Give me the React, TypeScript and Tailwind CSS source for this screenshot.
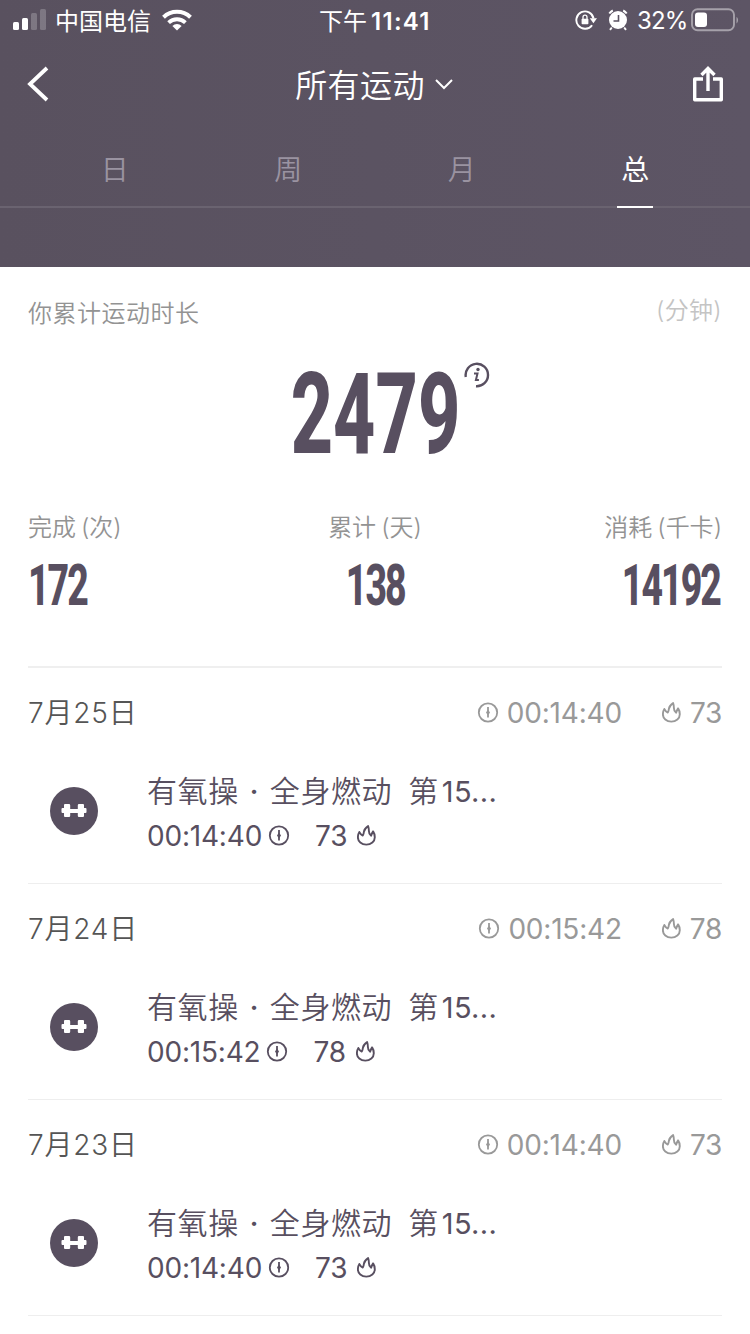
import type { ReactNode } from 'react';

interface Workout {
  date: string;
  duration: string;
  calories: number;
}

const workouts: Workout[] = [
  { date: '7月25日', duration: '00:14:40', calories: 73 },
  { date: '7月24日', duration: '00:15:42', calories: 78 },
  { date: '7月23日', duration: '00:14:40', calories: 73 },
];

const tabs = ['日', '周', '月', '总'];

function ClockIcon() {
  return (
    <svg width="22" height="22" viewBox="0 0 22 22" fill="none" stroke="currentColor" className="shrink-0">
      <circle cx="11" cy="10.5" r="9.2" strokeWidth="1.8" />
      <path d="M11 5v10.5" strokeWidth="1.8" />
      <path d="M11 7.5l2 3-2 3-2-3z" fill="currentColor" stroke="none" />
    </svg>
  );
}

function FlameIcon() {
  return (
    <svg width="20" height="22" viewBox="0 0 20 22" fill="none" stroke="currentColor" strokeWidth="1.9" strokeLinejoin="round" className="shrink-0">
      <path d="M2.4 7C1.400 8.600.9 10.400.9 12.200c0 4.300 3.600 7.400 8.400 7.400s8.500-3.100 8.500-7.400c0-2.200-.5-4.100-1.700-5.800-.6.900-1.400 2.300-2 4.300-1.500-1-2.200-2.600-2.200-4.700 0-1.700-.2-3.300-.8-4.900-2.400 1.600-3.900 3.500-4.200 5.700-.2 1.500-.4 2.700-1.100 3.800C4.300 9.800 3.100 8.700 2.400 7z" />
    </svg>
  );
}

function StatusBar() {
  return (
    <div className="flex h-10 items-center pl-[13px] pr-[11px]">
      <svg width="34" height="22" viewBox="0 0 34 22" fill="#fff">
        <rect x="0" y="13" width="6" height="8" rx="1.5" />
        <rect x="9" y="9" width="6" height="12" rx="1.5" />
        <rect x="18" y="4" width="6" height="17" rx="1.5" opacity=".22" />
        <rect x="27" y="0" width="6" height="21" rx="1.5" opacity=".22" />
      </svg>
      <span className="ml-[8px] w-[98px] pt-[3px] text-[24px] leading-10">中国电信</span>
      <svg width="30" height="22" viewBox="0 0 30 22" fill="none" stroke="#fff" strokeWidth="4" className="ml-[9px]">
        <path d="M1.5 8.2a19.500 19.500 0 0 1 27 0" />
        <path d="M6.6 13.7a12 12 0 0 1 16.800 0" strokeWidth="3.8" />
        <path d="M15 21.500l-4.600-4.600a6.600 6.600 0 0 1 9.200 0z" fill="#fff" stroke="none" />
      </svg>
      <div className="ml-[127px] flex w-[114px] items-center gap-[4px] pt-[3px] whitespace-nowrap">
        <span className="text-[24px] leading-10">下午</span>
        <span className="text-[24px] font-semibold tracking-[1.3px]">11:41</span>
      </div>
      <svg width="22" height="22" viewBox="0 0 22 22" fill="none" stroke="#fff" strokeWidth="1.9" className="ml-[142px]">
        <path d="M17.1 16.200a8.700 8.700 0 1 1 1.500-6.700" />
        <path d="M14.800 9.300h7.200l-3.600 5z" fill="#fff" stroke="none" />
        <rect x="6.6" y="9.8" width="6.8" height="5.4" rx="0.8" fill="#fff" stroke="none" />
        <path d="M8 10V8.200a2 2 0 0 1 4 0V10" strokeWidth="1.3" />
      </svg>
      <svg width="20" height="22" viewBox="0 0 20 22" fill="none" stroke="#fff" className="ml-[11px]">
        <circle cx="10" cy="11" r="9" fill="#fff" stroke="none" />
        <path d="M1.300 4.500a9 9 0 0 1 3.500-3M18.700 4.500a9 9 0 0 0-3.500-3M3.800 18.500L2 20.800M16.200 18.500l1.800 2.300" strokeWidth="2" />
        <path d="M10.500 6v6H5.500" stroke="#5a5261" strokeWidth="1.6" />
      </svg>
      <span className="ml-[9px] w-[50px] pt-[2px] text-[24px] leading-10 tracking-[-0.8px]">32%</span>
      <svg width="48" height="24" viewBox="0 0 48 24" fill="none" className="ml-[4px] shrink-0">
        <rect x="1" y="1.2" width="42" height="21" rx="5.5" stroke="#fff" strokeOpacity=".45" strokeWidth="1.9" />
        <rect x="4" y="4.5" width="12" height="14.5" rx="3" fill="#fff" />
        <path d="M45.500 9c2 1 2 5 0 6.500z" fill="#fff" opacity=".45" />
      </svg>
    </div>
  );
}

function Header() {
  return (
    <header className="h-[267px] bg-gradient-to-r from-[#59515f] to-[#5d5565] text-white">
      <StatusBar />
      <div className="flex h-[88px] items-center justify-between pl-[27px] pr-[26px]">
        <svg width="32" height="36" viewBox="0 0 32 36" fill="none" stroke="#fff" strokeWidth="3.8">
          <path d="M20 2L3 18l17 16" />
        </svg>
        <div className="mr-[3px] flex items-center">
          <span className="pt-[3px] text-[32px] leading-[48px] font-[350] tracking-[0.4px]">所有运动</span>
          <svg width="18" height="12" viewBox="0 0 18 12" fill="none" stroke="#fff" strokeWidth="2" className="ml-[10px]">
            <path d="M1 2l8 8 8-8" />
          </svg>
        </div>
        <svg width="32" height="36" viewBox="0 0 32 36" fill="none" stroke="#fff" strokeWidth="3.4">
          <path d="M11 13H2.700v20.700h26.600V13H21" strokeLinejoin="round" />
          <path d="M16 25V3M9.500 9L16 2.500 22.500 9" />
        </svg>
      </div>
      <nav className="flex h-20 justify-center border-b-2 border-[#6a6370] px-[28px]">
        {tabs.map((tab) => (
          <div key={tab} className="flex w-[173.5px] shrink-0 justify-center">
            <div
              className={
                tab === '总'
                  ? 'h-20 w-[36px] border-b-2 border-white text-center text-[28px] leading-[84px]'
                  : 'h-20 w-[36px] text-center text-[28px] leading-[84px] font-[350] text-[#9a93a1]'
              }
            >
              {tab}
            </div>
          </div>
        ))}
      </nav>
    </header>
  );
}

function Stat({ label, unit, children, className, origin }: { label: string; unit: string; children: ReactNode; className: string; origin: string }) {
  return (
    <div className={`flex flex-1 flex-col ${className}`}>
      <div className="flex h-9 items-center gap-[5px] pt-[3px] text-[24px] font-[350] text-[#939393]">
        <span>{label}</span>
        <span>({unit})</span>
      </div>
      <div className={`mt-[10px] scale-x-[0.65] font-['Roboto'] text-[57.5px] leading-[64px] font-extrabold tracking-[-3px] ${origin}`}>{children}</div>
    </div>
  );
}

function Summary() {
  return (
    <section className="mx-[28px] h-[401px] border-b-2 border-[#efefef]">
      <div className="flex h-[90px] justify-between">
        <span className="text-[24px] leading-[93px] font-[350] tracking-[0.5px] text-[#939393]">你累计运动时长</span>
        <span className="text-[24px] leading-[88px] font-[350] tracking-[0.3px] text-[#c4c4c4]">(分钟)</span>
      </div>
      <div className="flex h-[151px] justify-center">
        <div className="relative flex w-[170px] justify-center">
          <span className="block scale-x-[0.645] font-['Roboto'] text-[114px] leading-[114px] font-extrabold">2479</span>
          <svg width="26" height="26" viewBox="0 0 26 26" fill="none" stroke="currentColor" strokeWidth="2.4" className="absolute top-[5px] left-full ml-[4px]">
            <path d="M1.800 15A11.200 11.200 0 1 1 12 24.200" />
            <circle cx="14" cy="7.5" r="1.7" fill="currentColor" stroke="none" />
            <path d="M10 11.500h3.500l-1.600 6.500h3" strokeWidth="2" />
          </svg>
        </div>
      </div>
      <div className="flex">
        <Stat label="完成" unit="次" className="items-start" origin="origin-left">172</Stat>
        <Stat label="累计" unit="天" className="items-center" origin="origin-center">138</Stat>
        <Stat label="消耗" unit="千卡" className="items-end" origin="origin-right pr-[3px]">14192</Stat>
      </div>
    </section>
  );
}

function WorkoutRow({ date, duration, calories }: Workout) {
  return (
    <li className="mx-[28px] h-[216px] border-b border-[#eee]">
      <div className="flex h-[89px] items-center text-[28px]">
        <span className="flex-1 font-[350] tracking-[0.8px] text-[#555]">{date}</span>
        <div className="flex items-center text-[#999]">
          <ClockIcon />
          <span className="ml-[8px] tracking-[-0.2px]">{duration}</span>
        </div>
        <div className="ml-[40px] flex items-center text-[#999]">
          <FlameIcon />
          <span className="ml-[8px] tracking-[-0.3px]">{calories}</span>
        </div>
      </div>
      <div className="flex h-[108px] items-center pl-[22px]">
        <div className="flex size-[48px] items-center justify-center rounded-full bg-[#584f60]">
          <svg width="26" height="14" viewBox="0 0 26 14" fill="#fff">
            <path d="M4 0h4q1.200 0 1.200 1.200V5h7.600V1.200Q16.800 0 18 0h4q1 0 1 1v3h1.500q1 0 1 1v3q0 1-1 1H23v3q0 1-1 1h-4q-1.200 0-1.200-1.200V9H9.200v2.800Q9.200 13 8 13H4q-1 0-1-1V9H1.500q-1 0-1-1V5q0-1 1-1H3V1q0-1 1-1z" />
          </svg>
        </div>
        <div className="ml-[49px] pt-[5px] text-[#584f60]">
          <div className="flex h-[45px] items-center pt-[3px] text-[30px] font-[350] whitespace-pre tracking-[0.6px]">
            <span>有氧操</span>
            <span className="w-[31px] text-center font-medium">·</span>
            <span>全身燃动</span>
            <span className="ml-[16px]">第</span>
            <span className="ml-[3px] text-[29px] font-normal tracking-[0.3px]">15...</span>
          </div>
          <div className="flex h-[47px] items-center text-[28px]">
            <span className="mr-[6px] tracking-[-0.2px]">{duration}</span>
            <ClockIcon />
            <span className="mr-[10px] ml-[25px] tracking-[-0.2px]">{calories}</span>
            <FlameIcon />
          </div>
        </div>
      </div>
    </li>
  );
}

export default function App() {
  return (
    <div className="h-[1334px] w-[750px] overflow-hidden bg-white font-['Inter','Noto_Sans_CJK_SC',sans-serif] text-[#584f60]">
      <Header />
      <Summary />
      <ul>
        {workouts.map((workout) => (
          <WorkoutRow key={workout.date} {...workout} />
        ))}
      </ul>
    </div>
  );
}
